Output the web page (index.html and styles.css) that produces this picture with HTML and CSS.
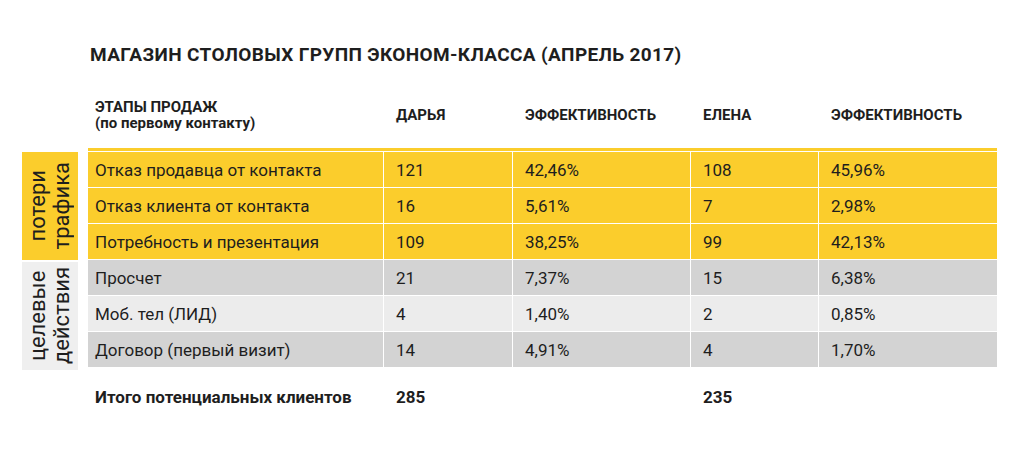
FILE: index.html
```html
<!DOCTYPE html>
<html lang="ru">
<head>
<meta charset="utf-8">
<link rel="stylesheet" href="styles.css">
</head>
<body>
<div class="page">
  <h1 class="title">МАГАЗИН СТОЛОВЫХ ГРУПП ЭКОНОМ-КЛАССА (АПРЕЛЬ 2017)</h1>
  <div class="report">
    <div class="side">
      <div class="side-head"></div>
      <div class="side-group side-yellow"><span class="vlabel">потери<br>трафика</span></div>
      <div class="side-group side-gray"><span class="vlabel">целевые<br>действия</span></div>
    </div>
    <table class="data">
      <colgroup>
        <col class="c-stage"><col class="c-num"><col class="c-eff"><col class="c-num2"><col class="c-eff2">
      </colgroup>
      <thead>
        <tr>
          <th>ЭТАПЫ ПРОДАЖ<br>(по первому контакту)</th>
          <th>ДАРЬЯ</th>
          <th>ЭФФЕКТИВНОСТЬ</th>
          <th>ЕЛЕНА</th>
          <th>ЭФФЕКТИВНОСТЬ</th>
        </tr>
      </thead>
      <tbody class="loss">
        <tr><td>Отказ продавца от контакта</td><td>121</td><td>42,46%</td><td>108</td><td>45,96%</td></tr>
        <tr><td>Отказ клиента от контакта</td><td>16</td><td>5,61%</td><td>7</td><td>2,98%</td></tr>
        <tr><td>Потребность и презентация</td><td>109</td><td>38,25%</td><td>99</td><td>42,13%</td></tr>
      </tbody>
      <tbody class="target">
        <tr class="dark"><td>Просчет</td><td>21</td><td>7,37%</td><td>15</td><td>6,38%</td></tr>
        <tr class="light"><td>Моб. тел (ЛИД)</td><td>4</td><td>1,40%</td><td>2</td><td>0,85%</td></tr>
        <tr class="dark"><td>Договор (первый визит)</td><td>14</td><td>4,91%</td><td>4</td><td>1,70%</td></tr>
      </tbody>
      <tfoot>
        <tr><td>Итого потенциальных клиентов</td><td>285</td><td></td><td>235</td><td></td></tr>
      </tfoot>
    </table>
  </div>
</div>
</body>
</html>
```
FILE: styles.css
```css
* { box-sizing: border-box; }
html, body { margin: 0; padding: 0; background: #ffffff; }
body {
  font-family: Roboto, "Noto Sans", "Liberation Sans", sans-serif;
  color: #1e1e1e;
  width: 1024px;
  height: 451px;
  overflow: hidden;
}
.page {
  padding: 43px 0 0 22px;
}
.title {
  margin: 0 0 0 68px;
  font-size: 19px;
  line-height: 23px;
  font-weight: 700;
  letter-spacing: 0.35px;
}
.report {
  display: flex;
  gap: 10px;
  margin-top: 28px;
}
.side {
  width: 56px;
  display: flex;
  flex-direction: column;
}
.side-head { height: 58px; }
.side-group {
  display: flex;
  align-items: center;
  justify-content: center;
}
.side-yellow { background: #fbcd2c; height: 108px; }
.side-gray { background: #efefef; height: 108px; margin-top: 2px; }
.vlabel {
  writing-mode: vertical-rl;
  transform: rotate(180deg);
  font-size: 22px;
  line-height: 24px;
  text-align: center;
  color: #1e1e1e;
}
.data {
  border-collapse: separate;
  border-spacing: 0;
  width: 909px;
  table-layout: fixed;
}
.c-stage { width: 296px; }
.c-num { width: 129px; }
.c-eff { width: 178px; }
.c-num2 { width: 128px; }
.c-eff2 { width: 178px; }
.data th {
  font-size: 15px;
  line-height: 16px;
  font-weight: 700;
  text-align: left;
  vertical-align: middle;
  padding: 0 0 12px 12px;
  height: 57px;
  border-bottom: 3px solid #fbcd2c;
}
.data th:first-child { padding-left: 7px; }
.data td {
  font-size: 17px;
  line-height: 20px;
  height: 36px;
  padding: 0 0 0 12px;
  border-right: 1px solid #ffffff;
  border-bottom: 1px solid #ffffff;
  vertical-align: middle;
}
.data td:first-child { padding-left: 7px; }
.data td:last-child { border-right: 0; }
.loss tr:first-child td { border-top: 1px solid #ffffff; height: 37px; }
.loss td { background: #fbcd2c; }
.target .dark td { background: #d3d3d3; }
.target .light td { background: #ececec; }
.data tfoot td {
  background: transparent;
  font-weight: 700;
  font-size: 17px;
  height: 58px;
  border: 0;
}
```
